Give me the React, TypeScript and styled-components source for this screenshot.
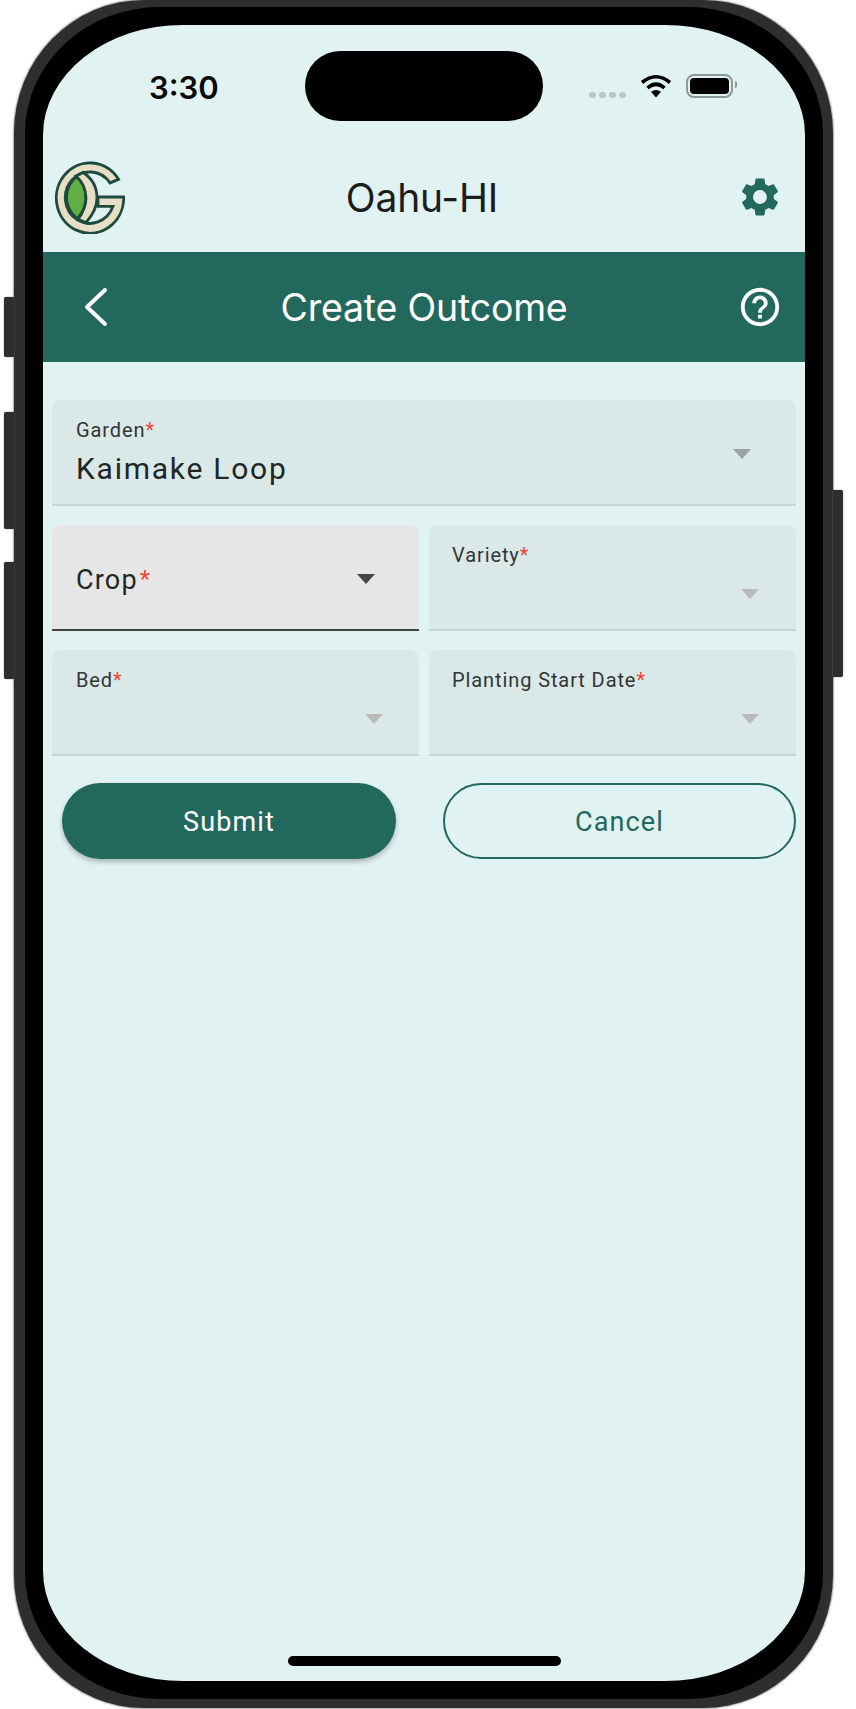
import React from "react";
import styled, { createGlobalStyle } from "styled-components";
import { MdSettings, MdHelpOutline } from "react-icons/md";

const GREEN = "#23685c";
const DARK_LINE = "#1d4a3c";
const CREAM = "#e6dfc6";

const GlobalStyle = createGlobalStyle`
  html, body {
    margin: 0;
    padding: 0;
    background: #fff;
    font-family: Roboto, "Liberation Sans", sans-serif;
  }
`;

const Page = styled.div`
  width: 856px;
  height: 1709px;
  padding-left: 14px;
  box-sizing: border-box;
  overflow: hidden;
`;

const Phone = styled.div`
  position: relative;
  width: 819px;
  height: 1708px;
  box-sizing: border-box;
  padding: 7px 10px 9px 11px;
  background: #2e2e2e;
  border-radius: 130px / 133px;
  box-shadow: 0 0 1.5px 1px #a8a8a8;
`;

const SideButton = styled.div<{ $top: number; $height: number; $right?: boolean }>`
  position: absolute;
  top: ${(p) => p.$top}px;
  height: ${(p) => p.$height}px;
  width: 10px;
  ${(p) => (p.$right ? "right: -10px;" : "left: -10px;")}
  background: #2e2e2e;
  border-radius: ${(p) => (p.$right ? "0 2px 2px 0" : "2px 0 0 2px")};
  box-shadow: 0 0 1.5px #777;
`;

const Bezel = styled.div`
  height: 100%;
  box-sizing: border-box;
  padding: 18px;
  background: #000;
  border-radius: 135px / 126px;
`;

const Screen = styled.div`
  height: 100%;
  display: flex;
  flex-direction: column;
  background: #e1f2f2;
  border-radius: 140px / 110px;
  overflow: hidden;
`;

const StatusBar = styled.div`
  display: grid;
  grid-template-columns: 262px 238px 262px;
  align-items: center;
  padding-top: 26px;
`;

const Time = styled.div`
  padding: 3px 0 0 106px;
  font-family: Inter, "Liberation Sans", sans-serif;
  font-size: 31px;
  font-weight: 600;
  color: #0a0a0a;
`;

const Island = styled.div`
  height: 70px;
  background: #000;
  border-radius: 35px;
`;

const Indicators = styled.div`
  display: flex;
  align-items: center;
  height: 24px;
  padding-left: 46px;
`;

const SignalDots = styled.div`
  display: flex;
  gap: 3.5px;
  align-self: flex-end;
  margin-right: 14px;
`;

const Dot = styled.span`
  width: 6.5px;
  height: 6.5px;
  border-radius: 50%;
  background: #b8c6c6;
`;

const Battery = styled.div`
  position: relative;
  width: 47px;
  height: 24px;
  margin-left: 14px;
  box-sizing: border-box;
  padding: 2px;
  border: 2px solid #8f9898;
  border-radius: 8px;
  &::after {
    content: "";
    position: absolute;
    right: -6px;
    top: 5px;
    width: 2px;
    height: 7px;
    background: #8f9898;
    border-radius: 0 2px 2px 0;
  }
`;

const BatteryFill = styled.div`
  height: 100%;
  background: #000;
  border-radius: 4px;
`;

const TopBar = styled.div`
  display: grid;
  grid-template-columns: 120px 1fr 120px;
  align-items: center;
  height: 131px;
  box-sizing: border-box;
  padding-top: 21px;
`;

const LogoCell = styled.div`
  display: flex;
  padding-left: 12px;
`;

const SideCell = styled.div`
  display: flex;
  justify-content: flex-end;
  padding-right: 22px;
  color: ${GREEN};
`;

const BarTitle = styled.div`
  padding-right: 4px;
  text-align: center;
  font-family: Inter, "Liberation Sans", sans-serif;
  font-size: 39px;
  font-weight: 400;
  letter-spacing: -0.2px;
  color: #1c1c1c;
`;

const PageBar = styled.div`
  display: grid;
  grid-template-columns: 120px 1fr 120px;
  align-items: center;
  height: 110px;
  background: ${GREEN};
  color: #fff;
`;

const BackCell = styled.div`
  display: flex;
  padding-left: 40px;
`;

const HelpCell = styled(SideCell)`
  color: #fff;
`;

const PageTitle = styled.div`
  text-align: center;
  font-family: Inter, "Liberation Sans", sans-serif;
  font-size: 37.5px;
  font-weight: 400;
  letter-spacing: -0.2px;
  color: #fff;
`;

const Form = styled.div`
  display: grid;
  grid-template-columns: 367px 367px;
  column-gap: 10px;
  row-gap: 19px;
  padding: 38px 9px 0;
`;

const Field = styled.div<{ $wide?: boolean; $active?: boolean }>`
  display: flex;
  align-items: center;
  height: 106px;
  box-sizing: border-box;
  grid-column: ${(p) => (p.$wide ? "1 / span 2" : "auto")};
  background: ${(p) => (p.$active ? "#e6e6e6" : "#dae9e8")};
  border-bottom: 2px solid ${(p) => (p.$active ? "#444" : "#c6d4d3")};
  border-radius: 9px 9px 0 0;
`;

const FieldText = styled.div<{ $inset?: number }>`
  flex: 1;
  padding-left: ${(p) => p.$inset ?? 24}px;
  align-self: flex-start;
`;

const CenteredText = styled.div`
  flex: 1;
  padding: 4px 0 0 24px;
`;

const Label = styled.div`
  margin-top: 18px;
  font-size: 20px;
  line-height: 24px;
  letter-spacing: 0.9px;
  color: #303636;
`;

const Value = styled.div`
  margin-top: 9px;
  font-size: 30px;
  line-height: 36px;
  letter-spacing: 1.75px;
  color: #1f2626;
`;

const Placeholder = styled.div`
  font-size: 27px;
  line-height: 36px;
  letter-spacing: 1.2px;
  color: #1f2626;
`;

const Star = styled.span`
  color: #f44336;
`;

const BigStar = styled(Star)`
  margin-left: 2px;
  font-size: 24px;
  vertical-align: 2px;
`;

const Arrow = styled.div<{ $color: string; $right: number; $drop: number }>`
  width: 0;
  height: 0;
  margin: ${(p) => p.$drop}px ${(p) => p.$right - 9.5}px 0 0;
  border-left: 9.5px solid transparent;
  border-right: 9.5px solid transparent;
  border-top: 10px solid ${(p) => p.$color};
`;

const Actions = styled.div`
  display: flex;
  justify-content: space-between;
  padding: 27px 9px 0 19px;
`;

const Submit = styled.button`
  width: 334px;
  height: 76px;
  padding: 2px 0 0;
  border: none;
  border-radius: 38px;
  background: ${GREEN};
  color: #fff;
  font-family: Roboto, sans-serif;
  font-size: 27px;
  font-weight: 450;
  letter-spacing: 1.1px;
  box-shadow: 0 3px 5px rgba(0, 0, 0, 0.25);
`;

const Cancel = styled.button`
  width: 353px;
  height: 76px;
  padding: 2px 0 0;
  box-sizing: border-box;
  border: 2px solid ${GREEN};
  border-radius: 38px;
  background: transparent;
  color: ${GREEN};
  font-family: Roboto, sans-serif;
  font-size: 27px;
  font-weight: 450;
  letter-spacing: 1.1px;
`;

const HomeArea = styled.div`
  margin-top: auto;
  display: flex;
  justify-content: center;
  padding-bottom: 15px;
`;

const HomeBar = styled.div`
  width: 273px;
  height: 10px;
  background: #000;
  border-radius: 5px;
`;

const Logo = () => (
  <svg width="70" height="73" viewBox="0 1.5 70 70" preserveAspectRatio="none">
    <path
      d="M63.5 19 A33.7 33.7 0 1 0 68.7 38 L68.7 36 L43 36 L43 45 L58 45 A24.6 24.6 0 1 1 55 22.5 Z"
      fill={CREAM}
      stroke={DARK_LINE}
      strokeWidth="2.8"
    />
    <path
      d="M22 16 C14 22 11.5 29 11.5 37 C11.5 45 15 51 22 57 C28 51 31 44 31 37 C31 29 28 22 22 16 Z"
      fill="#62ae44"
      stroke={DARK_LINE}
      strokeWidth="2.8"
    />
    <path
      d="M28 12.5 C37 18 42 27 42 37 C42 47 37 54 31 60.5 L23 57.5 C28 51 31 44 31 37 C31 29 28 22 21 16 Z"
      fill={CREAM}
      stroke={DARK_LINE}
      strokeWidth="2.8"
    />
  </svg>
);

const Wifi = () => (
  <svg width="32" height="24" viewBox="0 0 32 24" fill="none" stroke="#000" strokeWidth="3.6">
    <path d="M2 8.5 Q16 -3 30 8.5" />
    <path d="M7.5 14 Q16 6.5 24.5 14" />
    <path d="M11 17.8 Q16 14.2 21 17.8 L16 23.5 Z" fill="#000" stroke="none" />
  </svg>
);

const BackIcon = () => (
  <svg width="26" height="40" viewBox="0 0 26 40" fill="none" stroke="#fff" strokeWidth="4" strokeLinecap="round" strokeLinejoin="round">
    <path d="M22 3 L4 20 L22 37" />
  </svg>
);

export default function App() {
  return (
    <Page>
      <GlobalStyle />
      <Phone>
        <SideButton $top={297} $height={60} />
        <SideButton $top={412} $height={117} />
        <SideButton $top={562} $height={117} />
        <SideButton $top={490} $height={187} $right />
        <Bezel>
          <Screen>
            <StatusBar>
              <Time>3:30</Time>
              <Island />
              <Indicators>
                <SignalDots>
                  <Dot />
                  <Dot />
                  <Dot />
                  <Dot />
                </SignalDots>
                <Wifi />
                <Battery>
                  <BatteryFill />
                </Battery>
              </Indicators>
            </StatusBar>
            <TopBar>
              <LogoCell>
                <Logo />
              </LogoCell>
              <BarTitle>Oahu-HI</BarTitle>
              <SideCell>
                <MdSettings size={46} />
              </SideCell>
            </TopBar>
            <PageBar>
              <BackCell>
                <BackIcon />
              </BackCell>
              <PageTitle>Create Outcome</PageTitle>
              <HelpCell>
                <MdHelpOutline size={46} />
              </HelpCell>
            </PageBar>
            <Form>
              <Field $wide>
                <FieldText>
                  <Label>
                    Garden<Star>*</Star>
                  </Label>
                  <Value>Kaimake Loop</Value>
                </FieldText>
                <Arrow $color="#9aa3a3" $right={55} $drop={4} />
              </Field>
              <Field $active>
                <CenteredText>
                  <Placeholder>
                    Crop<BigStar>*</BigStar>
                  </Placeholder>
                </CenteredText>
                <Arrow $color="#444" $right={54} $drop={4} />
              </Field>
              <Field>
                <FieldText $inset={23}>
                  <Label>
                    Variety<Star>*</Star>
                  </Label>
                </FieldText>
                <Arrow $color="#bbbaba" $right={47} $drop={34} />
              </Field>
              <Field>
                <FieldText>
                  <Label>
                    Bed<Star>*</Star>
                  </Label>
                </FieldText>
                <Arrow $color="#bbbaba" $right={46} $drop={34} />
              </Field>
              <Field>
                <FieldText $inset={23}>
                  <Label>
                    Planting Start Date<Star>*</Star>
                  </Label>
                </FieldText>
                <Arrow $color="#bbbaba" $right={47} $drop={34} />
              </Field>
            </Form>
            <Actions>
              <Submit>Submit</Submit>
              <Cancel>Cancel</Cancel>
            </Actions>
            <HomeArea>
              <HomeBar />
            </HomeArea>
          </Screen>
        </Bezel>
      </Phone>
    </Page>
  );
}
